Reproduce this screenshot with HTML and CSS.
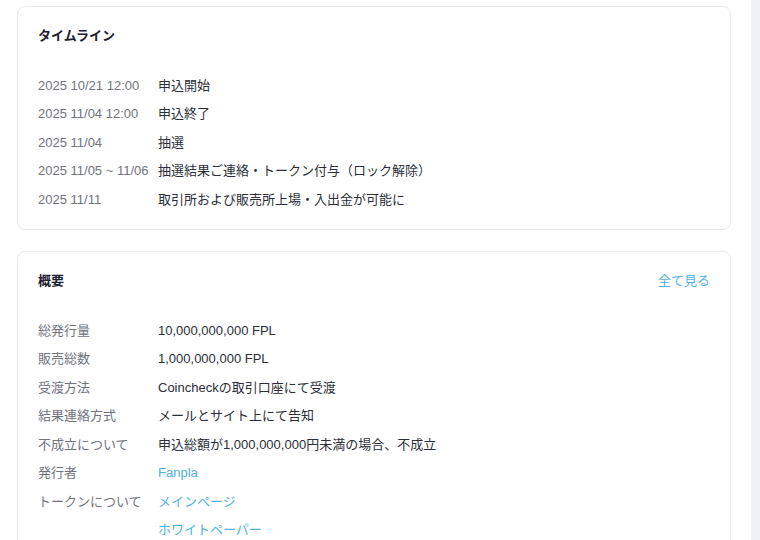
FILE: index.html
```html
<!DOCTYPE html>
<html lang="ja">
<head>
<meta charset="utf-8">
<link rel="stylesheet" href="styles.css">
</head>
<body>
<div class="page">
  <main class="content">
    <section class="card card-timeline">
      <h2 class="card-title">タイムライン</h2>
      <dl class="rows">
        <div class="row"><dt>2025 10/21 12:00</dt><dd>申込開始</dd></div>
        <div class="row"><dt>2025 11/04 12:00</dt><dd>申込終了</dd></div>
        <div class="row"><dt>2025 11/04</dt><dd>抽選</dd></div>
        <div class="row"><dt>2025 11/05 ~ 11/06</dt><dd>抽選結果ご連絡・トークン付与（ロック解除）</dd></div>
        <div class="row"><dt>2025 11/11</dt><dd>取引所および販売所上場・入出金が可能に</dd></div>
      </dl>
    </section>
    <section class="card card-summary">
      <div class="card-head">
        <h2 class="card-title">概要</h2>
        <a class="link more" href="#">全て見る</a>
      </div>
      <dl class="rows">
        <div class="row"><dt>総発行量</dt><dd>10,000,000,000 FPL</dd></div>
        <div class="row"><dt>販売総数</dt><dd>1,000,000,000 FPL</dd></div>
        <div class="row"><dt>受渡方法</dt><dd>Coincheckの取引口座にて受渡</dd></div>
        <div class="row"><dt>結果連絡方式</dt><dd>メールとサイト上にて告知</dd></div>
        <div class="row"><dt>不成立について</dt><dd>申込総額が1,000,000,000円未満の場合、不成立</dd></div>
        <div class="row"><dt>発行者</dt><dd><a class="link" href="#">Fanpla</a></dd></div>
        <div class="row"><dt>トークンについて</dt><dd><a class="link" href="#">メインページ</a></dd></div>
        <div class="row"><dt></dt><dd><a class="link" href="#">ホワイトペーパー</a></dd></div>
      </dl>
    </section>
  </main>
  <div class="side-strip"></div>
</div>
</body>
</html>
```

FILE: styles.css
```css
html, body {
  margin: 0;
  padding: 0;
  background: #ffffff;
  height: 100%;
  overflow: hidden;
}
body {
  font-family: "Liberation Sans", "Noto Sans CJK JP", Arial, sans-serif;
  color: #2b2e38;
  -webkit-font-smoothing: antialiased;
}
.page {
  display: flex;
  height: 540px;
}
.content {
  flex: 1;
  padding: 6px 20px 0 17px;
  display: flex;
  flex-direction: column;
  gap: 21px;
}
.side-strip {
  width: 9px;
  background: #eef1f7;
}
.card {
  border: 1px solid #e9e9f1;
  border-radius: 8px;
  background: #ffffff;
  padding: 19px 20px 15px 20px;
}
.card-title {
  margin: 0;
  font-size: 13px;
  line-height: 20px;
  font-weight: 700;
  color: #1c2030;
}
.card-head {
  display: flex;
  justify-content: space-between;
  align-items: center;
}
.link {
  color: #4fb2e2;
  text-decoration: none;
}
.more {
  font-size: 13px;
  line-height: 20px;
}
.rows {
  margin: 25.5px 0 0 0;
  padding: 0;
}
.row {
  display: flex;
  line-height: 28.5px;
  height: 28.5px;
  font-size: 13px;
}
.row dt {
  width: 120px;
  flex: none;
  color: #70737d;
  white-space: nowrap;
}
.row dd {
  margin: 0;
  color: #2b2e38;
  white-space: nowrap;
}
```
